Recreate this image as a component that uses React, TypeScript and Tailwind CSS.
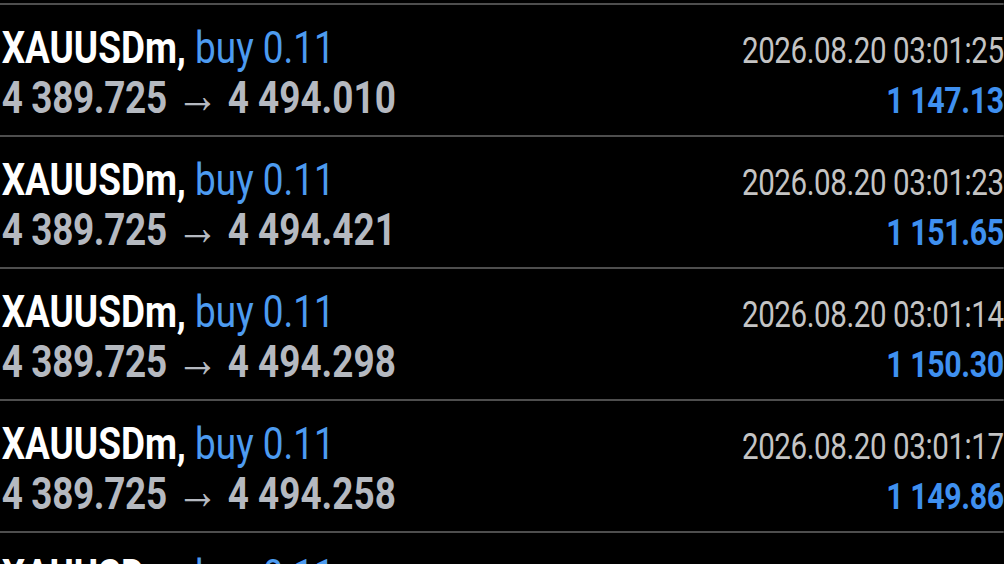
const deals = [
  { time: "2026.08.20 03:01:25", close: "4 494.010", profit: "1 147.13" },
  { time: "2026.08.20 03:01:23", close: "4 494.421", profit: "1 151.65" },
  { time: "2026.08.20 03:01:14", close: "4 494.298", profit: "1 150.30" },
  { time: "2026.08.20 03:01:17", close: "4 494.258", profit: "1 149.86" },
  { time: "2026.08.20 03:01:12", close: "4 494.102", profit: "1 148.51" },
];

export default function App() {
  return (
    <div className="w-[1004px] h-[564px] overflow-hidden bg-black" style={{ fontFamily: "Roboto, 'Noto Sans', sans-serif" }}>
      {/* the capture is squeezed horizontally, so lay out wide and compress */}
      <div className="w-[1224px] origin-top-left scale-x-[0.82] pt-[3px]">
        {deals.map((d, i) => (
          <div key={i} className="h-[132px] border-t-2 border-[#4e4e4e] pl-[2px] pt-[18px]">
            <div className="flex items-baseline justify-between">
              <div className="text-[45px] leading-[50px] whitespace-nowrap">
                <span className="font-bold text-white">XAUUSDm,</span>{" "}
                <span className="text-[#4d9bf0]">buy 0.11</span>
              </div>
              <div className="text-[36px] leading-[40px] tracking-[-0.5px] text-[#c4c4c4] whitespace-nowrap">{d.time}</div>
            </div>
            <div className="flex items-baseline justify-between">
              <div className="text-[45px] leading-[50px] font-bold text-[#b5b9c0] whitespace-nowrap">
                <span className="tracking-[-0.4px]">4 389.725</span>{" "}
                <span className="font-normal text-[52px] leading-[0]">→</span>{" "}
                {d.close}
              </div>
              <div className="text-[37px] leading-[40px] tracking-[-0.5px] font-bold text-[#3f90f0] whitespace-nowrap">{d.profit}</div>
            </div>
          </div>
        ))}
      </div>
    </div>
  );
}
